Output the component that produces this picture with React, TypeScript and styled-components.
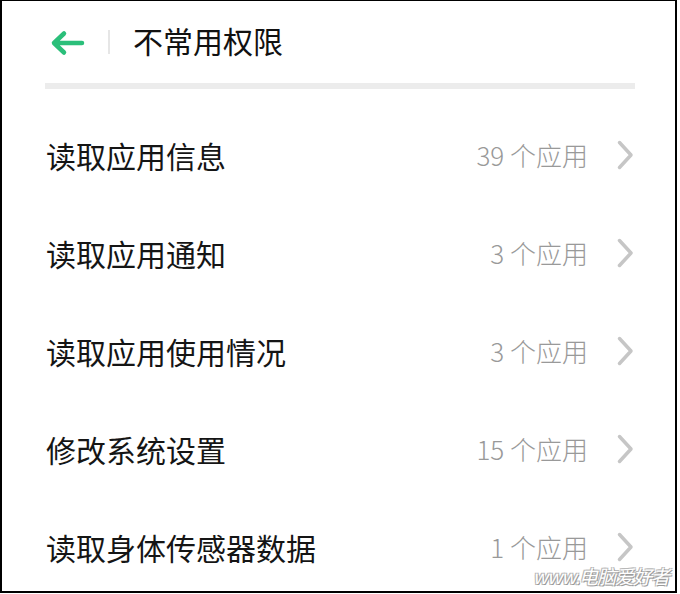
import React from 'react';
import styled, { createGlobalStyle } from 'styled-components';

const GlobalStyle = createGlobalStyle`
  html, body {
    margin: 0;
    padding: 0;
    background: #ffffff;
  }
  body {
    font-family: "Noto Sans CJK SC", "Noto Sans", sans-serif;
  }
`;

const Frame = styled.div`
  position: relative;
  width: 677px;
  height: 593px;
  box-sizing: border-box;
  border-style: solid;
  border-color: #000;
  border-width: 1px 2px 2px 2px;
  background: #fff;
  overflow: hidden;
`;

const Header = styled.header`
  height: 82px;
  display: flex;
  align-items: center;
  padding-left: 48px;
`;

const BackButton = styled.div`
  width: 36px;
  height: 26px;
  display: flex;
  align-items: center;
  margin-top: 1px;
`;

const Divider = styled.div`
  width: 2px;
  height: 24px;
  background: #e6e6e6;
  margin-left: 22px;
  margin-right: 23px;
`;

const Title = styled.h1`
  margin: 0 0 5px 0;
  font-size: 30px;
  font-weight: 400;
  color: #111;
  line-height: 1;
`;

const Bar = styled.div`
  height: 6px;
  margin: 0 40px 0 43px;
  background: #ececec;
`;

const List = styled.div`
  padding-top: 17px;
  display: flex;
  flex-direction: column;
`;

const Row = styled.div`
  height: 98px;
  flex-shrink: 0;
  display: flex;
  align-items: center;
  padding: 0 41px 0 44px;
`;

const Label = styled.div`
  flex: 1;
  font-size: 30px;
  color: #151515;
  line-height: 1;
`;

const Count = styled.div`
  font-size: 26px;
  font-weight: 300;
  color: #999;
  line-height: 1;
  margin-right: 29px;
`;

const Chevron = styled.svg`
  display: block;
`;

const Watermark = styled.div`
  position: absolute;
  right: 6px;
  bottom: 6px;
  font-size: 19px;
  line-height: 1;
  font-style: italic;
  color: #fff;
  letter-spacing: -1px;
  text-shadow: 1px 1px 0 #9a9a9a, -1px -1px 0 #b8b8b8, 1px -1px 0 #b8b8b8, -1px 1px 0 #b8b8b8;
`;

const rows = [
  { name: '读取应用信息', count: 39 },
  { name: '读取应用通知', count: 3 },
  { name: '读取应用使用情况', count: 3 },
  { name: '修改系统设置', count: 15 },
  { name: '读取身体传感器数据', count: 1 },
];

export default function App() {
  return (
    <>
      <GlobalStyle />
      <Frame>
        <Header>
          <BackButton>
            <svg width="36" height="26" viewBox="0 0 36 26">
              <path
                d="M4 13 H32 M14 3.5 L4 13 L14 22.5"
                fill="none"
                stroke="#2bbf7a"
                strokeWidth="4.5"
                strokeLinecap="round"
                strokeLinejoin="round"
              />
            </svg>
          </BackButton>
          <Divider />
          <Title>不常用权限</Title>
        </Header>
        <Bar />
        <List>
          {rows.map((r) => (
            <Row key={r.name}>
              <Label>{r.name}</Label>
              <Count>{r.count} 个应用</Count>
              <Chevron width="17" height="30" viewBox="0 0 17 30">
                <path
                  d="M2.5 2.5 L14 15 L2.5 27.5"
                  fill="none"
                  stroke="#c6c6c6"
                  strokeWidth="3.5"
                  strokeLinecap="round"
                  strokeLinejoin="round"
                />
              </Chevron>
            </Row>
          ))}
        </List>
        <Watermark>www.电脑爱好者</Watermark>
      </Frame>
    </>
  );
}
